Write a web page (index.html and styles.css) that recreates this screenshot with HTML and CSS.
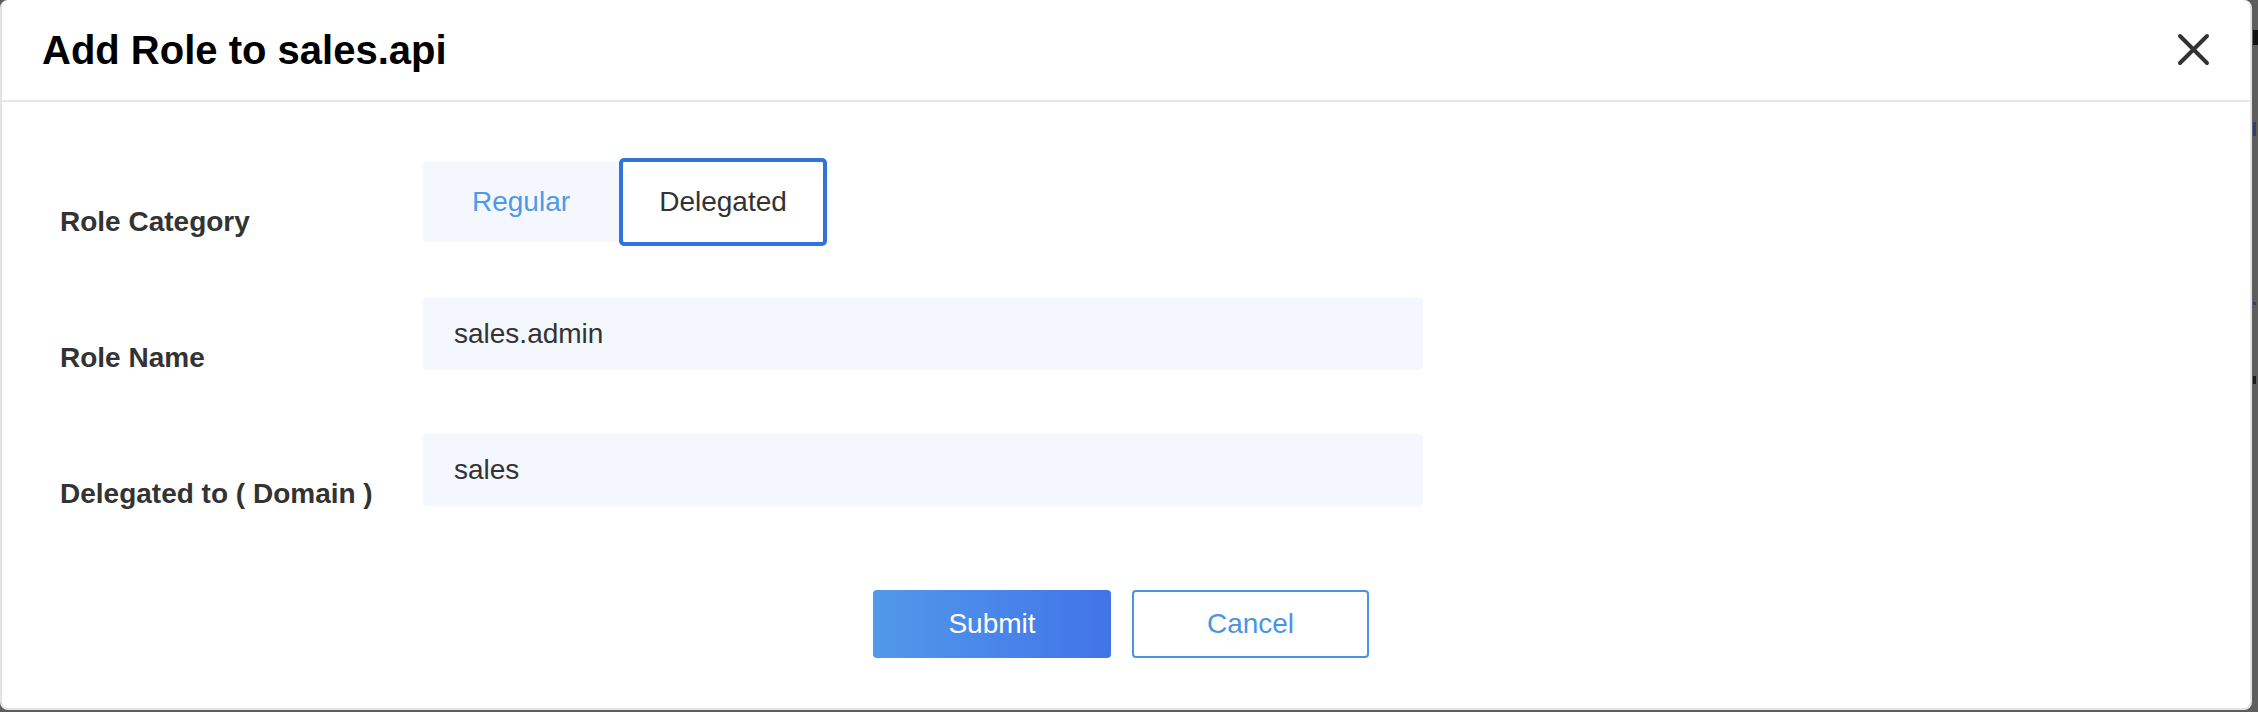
FILE: index.html
```html
<!DOCTYPE html>
<html lang="en">
<head>
<meta charset="utf-8">
<title>Add Role to sales.api</title>
<link rel="stylesheet" href="styles.css">
</head>
<body>
<div class="page-behind" aria-hidden="true">
  <div class="peek peek-1"></div>
  <div class="peek peek-2"></div>
  <div class="peek peek-3"></div>
  <div class="peek peek-4"></div>
</div>
<div class="modal">
  <header class="modal-header">
    <h1 class="modal-title">Add Role to sales.api</h1>
    <button class="close-btn" aria-label="Close">
      <svg width="33" height="33" viewBox="0 0 33 33">
        <path d="M3 3 L30 30 M30 3 L3 30" stroke="#333" stroke-width="4" stroke-linecap="round" fill="none"/>
      </svg>
    </button>
  </header>
  <div class="modal-body">
    <div class="row row-category">
      <div class="label">Role Category</div>
      <div class="segmented">
        <div class="seg seg-regular">Regular</div>
        <div class="seg seg-delegated">Delegated</div>
      </div>
    </div>
    <div class="row row-name">
      <div class="label">Role Name</div>
      <div class="input">sales.admin</div>
    </div>
    <div class="row row-domain">
      <div class="label">Delegated to ( Domain )</div>
      <div class="input">sales</div>
    </div>
    <div class="actions">
      <button class="btn btn-submit">Submit</button>
      <button class="btn btn-cancel">Cancel</button>
    </div>
  </div>
</div>
</body>
</html>
```

FILE: styles.css
```css
html, body {
  margin: 0;
  padding: 0;
}

body {
  width: 2258px;
  height: 712px;
  background: #5d5d5d;
  font-family: "Liberation Sans", Arial, Helvetica, sans-serif;
  overflow: hidden;
  position: relative;
}

.page-behind {
  position: absolute;
  left: 0;
  top: 0;
  width: 2258px;
  height: 712px;
}

.peek {
  position: absolute;
  left: 2253px;
  width: 5px;
}

.peek-1 { top: 30px; height: 15px; background: #111; }
.peek-2 { top: 122px; height: 14px; width: 3px; background: #2a3f7a; }
.peek-3 { top: 302px; height: 3px; width: 3px; background: #2a3f7a; }
.peek-4 { top: 376px; height: 8px; width: 3px; background: #1a1a1a; }

.modal {
  position: relative;
  width: 2252px;
  height: 710px;
  box-sizing: border-box;
  background: #fff;
  border: 2px solid #e4e4e4;
  border-top: 0;
  border-radius: 8px;
}

.modal-header {
  height: 102px;
  box-sizing: border-box;
  display: flex;
  justify-content: space-between;
  align-items: flex-start;
  padding: 27px 40px 0 40px;
  border-bottom: 2px solid #e6e6e6;
}

.modal-title {
  margin: 0;
  font-size: 40px;
  line-height: 46px;
  font-weight: bold;
  color: #000;
}

.close-btn {
  margin: 6px 0 0 0;
  padding: 0;
  border: 0;
  background: none;
  width: 33px;
  height: 33px;
  display: block;
}

.close-btn svg {
  display: block;
}

.modal-body {
  padding: 60px 0 0 58px;
}

.row {
  display: flex;
  align-items: flex-start;
}

.row-name { margin-top: 56px; }
.row-domain { margin-top: 60px; }

.label {
  width: 363px;
  padding-top: 44px;
  font-size: 28px;
  line-height: 32px;
  font-weight: bold;
  color: #333;
}

.segmented {
  display: flex;
  align-items: center;
  height: 80px;
}

.seg {
  font-size: 28px;
  text-align: center;
  box-sizing: border-box;
}

.seg-regular {
  width: 196px;
  height: 80px;
  line-height: 80px;
  background: #f4f7fd;
  color: #4d9ae9;
  border-radius: 4px 0 0 4px;
}

.seg-delegated {
  width: 208px;
  height: 88px;
  line-height: 80px;
  background: #fff;
  color: #333;
  border: 4px solid #2f74d9;
  border-radius: 5px;
}

.input {
  width: 1000px;
  height: 72px;
  line-height: 72px;
  box-sizing: border-box;
  padding-left: 31px;
  background: #f4f7fd;
  border-radius: 4px;
  font-size: 28px;
  color: #333;
}

.actions {
  display: flex;
  gap: 21px;
  margin-top: 80px;
  padding-left: 813px;
}

.btn {
  height: 68px;
  box-sizing: border-box;
  border-radius: 4px;
  font-family: "Liberation Sans", Arial, Helvetica, sans-serif;
  font-size: 28px;
  padding: 0;
  cursor: pointer;
}

.btn-submit {
  width: 238px;
  border: 0;
  color: #fff;
  background: linear-gradient(90deg, #5199ea 0%, #4174e8 100%);
}

.btn-cancel {
  width: 237px;
  border: 2px solid #4a94e6;
  background: #fff;
  color: #4a94e6;
}
```
